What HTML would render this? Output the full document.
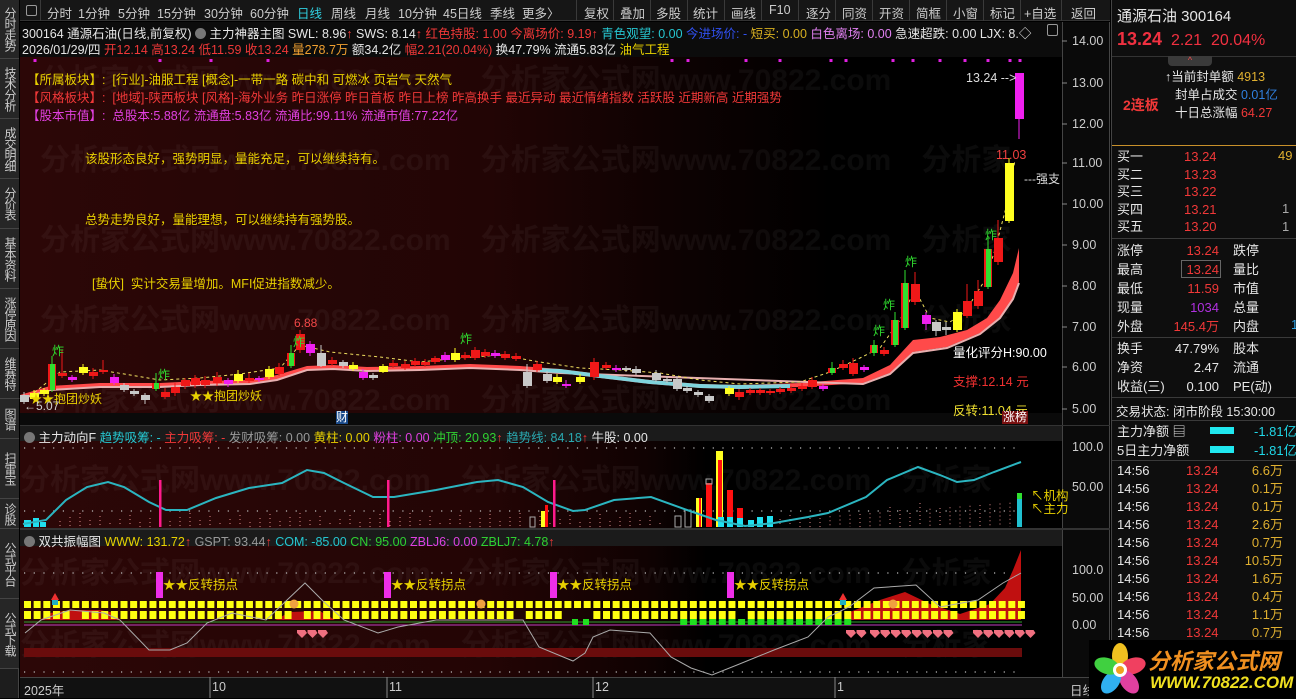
<!DOCTYPE html>
<html><head><meta charset="utf-8">
<style>
*{margin:0;padding:0;box-sizing:border-box}
body{width:1296px;height:698px;background:#000;overflow:hidden;position:relative;font-family:"Liberation Sans","Noto Sans CJK SC",sans-serif;font-size:12px;color:#ddd}
.a{position:absolute;white-space:nowrap}
#side{position:absolute;left:0;top:0;width:19px;height:698px;background:#1d1d1d;border-right:1px solid #444}
.tab{position:absolute;left:0;width:19px;border-bottom:1px solid #444;color:#ccc;font-size:12px;line-height:13px;text-align:center;writing-mode:vertical-rl;letter-spacing:-1px;display:flex;align-items:center;justify-content:center;background:#262626}
#tb{position:absolute;left:20px;top:0;width:1090px;height:21px;background:#161616;border-bottom:1px solid #333}
.tbi{position:absolute;top:3px;font-size:12.5px;color:#ccc}
.tbd{position:absolute;top:0;width:1px;height:21px;background:#3a3a3a}
.r{color:#f03838}.y{color:#e8d000}.c{color:#26c6d0}.m{color:#e040e0}.w{color:#e6e6e6}.g{color:#999}.gr{color:#30d030}.o{color:#f0a030}
.ax{position:absolute;left:1072px;font-size:12.5px;color:#ccc}
.rp{position:absolute;font-size:13px;white-space:nowrap}
.sep{position:absolute;left:1112px;width:184px;height:1px;background:#3a3a3a}
.wm{position:absolute;font-size:30px;font-weight:bold;color:rgba(255,255,255,0.045);white-space:nowrap}
#rpan{position:absolute;left:1111px;top:0;width:185px;height:698px;background:#0e0e0e;overflow:hidden}
</style></head><body>

<div class="a" style="left:20px;top:22px;width:1042px;height:35px;background:#0c0c0c"></div>
<div class="a" style="left:20px;top:57px;width:1042px;height:356px;background:linear-gradient(to right,#2c0707 0%,#220505 45%,#0e0202 62%,#000 78%)"></div>
<div class="a" style="left:20px;top:413px;width:1042px;height:13px;background:#0a0a0a"></div>
<div class="a" style="left:20px;top:426px;width:1042px;height:15px;background:#1b1b1b"></div>
<div class="a" style="left:20px;top:441px;width:1042px;height:88px;background:linear-gradient(to right,#2c0707 0%,#230505 45%,#100202 60%,#000 66%)"></div>
<div class="a" style="left:20px;top:530px;width:1042px;height:16px;background:#1b1b1b"></div>
<div class="a" style="left:20px;top:546px;width:1042px;height:131px;background:linear-gradient(to right,#2c0707 0%,#230505 45%,#100202 60%,#000 66%)"></div>
<div class="a" style="left:20px;top:677px;width:1090px;height:21px;background:#111;border-top:1px solid #444"></div>
<div class="a" style="left:1062px;top:22px;width:48px;height:655px;background:#0a0a0a;border-left:1px solid #444;border-right:1px solid #444"></div>
<div class="a" style="left:20px;top:528px;width:1090px;height:2px;background:#333"></div>
<div class="a" style="left:20px;top:425px;width:1090px;height:1px;background:#333"></div>

<div class="wm" style="left:40px;top:55px">分析家公式网www.70822.com　分析家公式网www.70822.com</div>
<div class="wm" style="left:40px;top:135px">分析家公式网www.70822.com　分析家公式网www.70822.com　分析家</div>
<div class="wm" style="left:40px;top:215px">分析家公式网www.70822.com　分析家公式网www.70822.com　分析家</div>
<div class="wm" style="left:40px;top:295px">分析家公式网www.70822.com　分析家公式网www.70822.com　分析家</div>
<div class="wm" style="left:40px;top:375px">分析家公式网www.70822.com　分析家公式网www.70822.com</div>
<div class="wm" style="left:20px;top:455px">分析家公式网www.70822.com　分析家公式网www.70822.com　分析家</div>
<div class="wm" style="left:20px;top:548px">分析家公式网www.70822.com　分析家公式网www.70822.com　分析家</div>
<div class="wm" style="left:20px;top:620px">分析家公式网www.70822.com　分析家公式网www.70822.com　分析家</div>

<svg id="cv" class="a" style="left:0;top:0" width="1296" height="698" xmlns="http://www.w3.org/2000/svg">
<g id="grid" stroke="#bbb" stroke-width="1.2" stroke-dasharray="1.2 8.5" fill="none">
<line x1="24" y1="448" x2="1020" y2="448"/>
<line x1="24" y1="511" x2="1020" y2="511"/>
<line x1="24" y1="573" x2="1020" y2="573"/>
<line x1="24" y1="672" x2="1020" y2="672"/>
</g>
<g id="vd" stroke="#d88" stroke-width="1" stroke-dasharray="1 3"></g>
<polygon fill="#ff4a4a" points="20,395 50,386 100,383 160,383 200,381 250,380 277,375 307,366 333,365 367,367 420,366 470,364 520,366 560,369 600,374 650,380 700,384 740,385 800,383 863,378 890,365 913,340 940,337 967,330 987,318 1000,300 1013,273 1019,248 1019,282 1013,298 1000,317 980,333 947,347 913,352 890,373 863,383 800,387 740,389 700,388 650,384 600,378 560,373 520,370 470,368 420,370 367,371 333,369 307,370 277,380 250,384 200,385 160,387 100,387 50,390 20,399"/>
<polyline fill="none" stroke="#e8b0b0" stroke-width="2" points="20,399 50,390 100,387 160,387 200,385 250,384 277,380 307,370 333,369 367,371 420,370 470,368 520,370 560,373 863,384 890,374 913,353 947,348 980,334 1000,318 1013,299 1019,283"/>
<polygon fill="#7fd3dc" points="540,368 560,369 600,374 650,380 700,384 740,385 790,384 790,388 740,389 700,388 650,384 600,378 560,373 540,372"/>
<polyline id="dash" fill="none" stroke="#f0e060" stroke-width="1" stroke-dasharray="3 3" points="25,400 60,372 100,370 160,380 200,378 240,374 280,368 300,345 330,352 380,357 420,362 460,358 500,355 540,362 580,368 620,370 660,373 700,380 740,384 800,382 830,372 860,358 880,348 900,320 915,290 930,318 950,322 965,312 985,280 995,250 1008,200 1015,160"/>
<g id="candles"></g>
<g id="ind1"></g>
<polyline fill="none" stroke="#2bb5c0" stroke-width="2" points="23,524 46,520 66,500 87,487 108,482 124,487 149,502 166,510 187,510 216,498 249,488 282,483 307,470 324,473 344,483 373,497 394,497 436,490 477,482 498,480 523,487 548,502 573,511 585,510 614,500 651,497 687,510 716,520 745,526 774,523 808,517 828,513 866,497 887,480 918,467 940,475 957,482 974,480 994,472 1021,462"/>
<g fill="#ff1a8c"><rect x="159" y="480" width="2.5" height="47"/><rect x="387" y="480" width="2.5" height="47"/><rect x="553" y="480" width="2.5" height="47"/></g>
<polygon fill="#c01010" points="40,620 50,613 70,610 100,610 115,613 120,620"/>
<polygon fill="#c01010" points="275,620 290,612 320,611 335,620"/>
<polygon fill="#c01010" points="845,620 850,612 880,600 905,592 930,604 960,614 990,604 1005,588 1013,570 1021,550 1021,620"/>
<rect x="24" y="648" width="998" height="9" fill="#6a0c0c"/>
<line x1="24" y1="622" x2="1022" y2="622" stroke="#30a030" stroke-width="1"/>
<line x1="24" y1="625" x2="1022" y2="625" stroke="#c040c0" stroke-width="1"/>
<g id="sq"></g>
<polyline fill="none" stroke="#aaa" stroke-width="1" points="25,633 41,620 70,610 104,613 120,620 149,650 170,650 187,643 207,623 232,613 266,620 305,583 324,602 344,620 378,633 398,627 436,620 469,620 523,620 539,647 573,661 585,653 593,637 610,630 650,633 671,657 691,668 712,675 737,665 774,650 808,637 828,617 849,607 874,588 916,585 940,607 978,600 1003,583 1021,573"/>
<g fill="#ee2ee8"><rect x="156" y="572" width="7" height="26"/><rect x="384" y="572" width="7" height="26"/><rect x="550" y="572" width="7" height="26"/><rect x="727" y="572" width="7" height="26"/></g>
<g id="hearts" fill="#f07080"></g>
<g stroke="#888"><line x1="1062" y1="41" x2="1067" y2="41"/><line x1="1062" y1="83" x2="1067" y2="83"/><line x1="1062" y1="124" x2="1067" y2="124"/><line x1="1062" y1="163" x2="1067" y2="163"/><line x1="1062" y1="204" x2="1067" y2="204"/><line x1="1062" y1="245" x2="1067" y2="245"/><line x1="1062" y1="286" x2="1067" y2="286"/><line x1="1062" y1="327" x2="1067" y2="327"/><line x1="1062" y1="367" x2="1067" y2="367"/><line x1="1062" y1="409" x2="1067" y2="409"/>
<line x1="210" y1="677" x2="210" y2="698"/><line x1="387" y1="677" x2="387" y2="698"/><line x1="593" y1="677" x2="593" y2="698"/><line x1="835" y1="677" x2="835" y2="698"/></g>
<g fill="#e020e0" id="mdots"></g>
</svg>

<div id="side">
<div class="tab" style="top:0;height:59px">分时走势</div>
<div class="tab" style="top:59px;height:60px">技术分析</div>
<div class="tab" style="top:119px;height:60px">成交明细</div>
<div class="tab" style="top:179px;height:50px">分价表</div>
<div class="tab" style="top:229px;height:60px">基本资料</div>
<div class="tab" style="top:289px;height:60px">涨停原因</div>
<div class="tab" style="top:349px;height:50px">维赛特</div>
<div class="tab" style="top:399px;height:40px">图谱</div>
<div class="tab" style="top:439px;height:60px">扫雷宝</div>
<div class="tab" style="top:499px;height:30px">诊股</div>
<div class="tab" style="top:529px;height:70px">公式平台</div>
<div class="tab" style="top:599px;height:70px">公式下载</div>
</div>

<div id="tb">
<div class="a" style="left:6px;top:5px;width:11px;height:11px;border:1px solid #999;border-radius:2px"></div>
<div class="tbd" style="left:20px"></div>
<span class="tbi" style="left:27px">分时</span><span class="tbi" style="left:58px">1分钟</span><span class="tbi" style="left:98px">5分钟</span><span class="tbi" style="left:137px">15分钟</span><span class="tbi" style="left:184px">30分钟</span><span class="tbi" style="left:230px">60分钟</span><span class="tbi" style="left:277px;color:#30d0e0">日线</span><span class="tbi" style="left:311px">周线</span><span class="tbi" style="left:345px">月线</span><span class="tbi" style="left:378px">10分钟</span><span class="tbi" style="left:423px">45日线</span><span class="tbi" style="left:470px">季线</span><span class="tbi" style="left:502px">更多〉</span>
<div class="tbd" style="left:556px"></div><span class="tbi" style="left:564px">复权</span>
<div class="tbd" style="left:593px"></div><span class="tbi" style="left:600px">叠加</span>
<div class="tbd" style="left:630px"></div><span class="tbi" style="left:636px">多股</span>
<div class="tbd" style="left:667px"></div><span class="tbi" style="left:673px">统计</span>
<div class="tbd" style="left:704px"></div><span class="tbi" style="left:711px">画线</span>
<div class="tbd" style="left:741px"></div><span class="tbi" style="left:749px">F10</span>
<div class="tbd" style="left:778px"></div><span class="tbi" style="left:786px">逐分</span>
<div class="tbd" style="left:815px"></div><span class="tbi" style="left:822px">同资</span>
<div class="tbd" style="left:852px"></div><span class="tbi" style="left:859px">开资</span>
<div class="tbd" style="left:889px"></div><span class="tbi" style="left:896px">简框</span>
<div class="tbd" style="left:926px"></div><span class="tbi" style="left:933px">小窗</span>
<div class="tbd" style="left:963px"></div><span class="tbi" style="left:970px">标记</span>
<div class="tbd" style="left:1000px"></div><span class="tbi" style="left:1004px">+自选</span>
<div class="tbd" style="left:1041px"></div><span class="tbi" style="left:1051px">返回</span>
</div>

<div class="a" style="left:22px;top:23px;font-size:12.5px"><span class="w">300164 通源石油(日线,前复权)</span> <span style="display:inline-block;width:11px;height:11px;border-radius:50%;background:#777;vertical-align:-1px"></span> <span class="w">主力神器主图 SWL: 8.96</span><span class="r">↑</span> <span class="w">SWS: 8.14</span><span class="r">↑</span> <span class="r">红色持股: 1.00 今离场价: 9.19↑</span> <span class="c">青色观望: 0.00</span> <span style="color:#3050f0">今进场价: -</span> <span style="color:#d8b020">短买: 0.00</span> <span style="color:#e080f0">白色离场: 0.00</span> <span class="w">急速超跌: 0.00 LJX: 8.◇</span></div>
<div class="a" style="left:1047px;top:24px;width:11px;height:12px;border:1px solid #999;border-radius:2px"></div>
<div class="a" style="left:22px;top:39px;font-size:12.5px"><span class="w">2026/01/29/四</span> <span class="r">开12.14 高13.24 低11.59 收13.24</span> <span class="o">量278.7万</span> <span class="w">额34.2亿</span> <span class="r">幅2.21(20.04%)</span> <span class="w">换47.79% 流通5.83亿</span> <span class="y">油气工程</span></div>

<div class="a y" style="left:27px;top:69px;font-size:12.5px">【所属板块】:&nbsp; [行业]-油服工程 [概念]-一带一路 碳中和 可燃冰 页岩气 天然气</div>
<div class="a r" style="left:27px;top:87px;font-size:12.5px">【风格板块】:&nbsp; [地域]-陕西板块 [风格]-海外业务 昨日涨停 昨日首板 昨日上榜 昨高换手 最近异动 最近情绪指数 活跃股 近期新高 近期强势</div>
<div class="a m" style="left:27px;top:105px;font-size:12.5px">【股本市值】:&nbsp; 总股本:5.88亿 流通盘:5.83亿 流通比:99.11% 流通市值:77.22亿</div>
<div class="a y" style="left:85px;top:148px;font-size:12.5px">该股形态良好，强势明显，量能充足，可以继续持有。</div>
<div class="a y" style="left:85px;top:209px;font-size:12.5px">总势走势良好，量能理想，可以继续持有强势股。</div>
<div class="a y" style="left:92px;top:273px;font-size:12.5px">[蛰伏]&nbsp; 实计交易量增加。MFI促进指数减少。</div>

<div class="a" style="left:52px;top:342px;color:#30e030;font-size:12px">炸</div>
<div class="a" style="left:158px;top:366px;color:#30e030;font-size:12px">炸</div>
<div class="a" style="left:293px;top:333px;color:#30e030;font-size:12px">炸</div>
<div class="a" style="left:460px;top:330px;color:#30e030;font-size:12px">炸</div>
<div class="a" style="left:873px;top:322px;color:#30e030;font-size:12px">炸</div>
<div class="a" style="left:883px;top:296px;color:#30e030;font-size:12px">炸</div>
<div class="a" style="left:905px;top:253px;color:#30e030;font-size:12px">炸</div>
<div class="a" style="left:985px;top:226px;color:#30e030;font-size:12px">炸</div>
<div class="a" style="left:294px;top:316px;color:#f04848;font-size:12px">6.88</div>
<div class="a y" style="left:30px;top:390px;font-size:12px">★★抱团炒妖</div>
<div class="a y" style="left:190px;top:387px;font-size:12px">★★抱团炒妖</div>
<div class="a" style="left:24px;top:399px;color:#ccc;font-size:12px">←5.07</div>
<div class="a" style="left:336px;top:411px;color:#fff;background:#1a4a8a;font-size:12px;line-height:13px">财</div>
<div class="a" style="left:966px;top:71px;color:#ddd;font-size:12.5px">13.24 --&gt;</div>
<div class="a" style="left:996px;top:148px;color:#f04040;font-size:12.5px">11.03</div>
<div class="a" style="left:1024px;top:170px;color:#ddd;font-size:12px">---强支</div>
<div class="a" style="left:953px;top:342px;color:#fff;font-size:12.5px">量化评分H:90.00</div>
<div class="a" style="left:953px;top:371px;color:#f03030;font-size:12.5px">支撑:12.14 元</div>
<div class="a" style="left:953px;top:400px;color:#f0e030;font-size:12.5px">反转:11.04 元</div>
<div class="a" style="left:1002px;top:411px;color:#fff;background:#7a1010;font-size:12px;line-height:13px;padding:0 1px">涨榜</div>

<div class="a" style="left:24px;top:427px;font-size:12.5px"><span style="display:inline-block;width:11px;height:11px;border-radius:50%;background:#777;vertical-align:-1px"></span> <span class="w">主力动向F</span> <span class="c">趋势吸筹: -</span> <span class="r">主力吸筹: -</span> <span class="g">发财吸筹: 0.00</span> <span class="y">黄柱: 0.00</span> <span class="m">粉柱: 0.00</span> <span class="gr">冲顶: 20.93</span><span class="r">↑</span> <span style="color:#2aa8b0">趋势线: 84.18</span><span class="r">↑</span> <span class="w">牛股: 0.00</span></div>
<div class="a" style="left:24px;top:531px;font-size:12.5px"><span style="display:inline-block;width:11px;height:11px;border-radius:50%;background:#777;vertical-align:-1px"></span> <span class="w">双共振幅图</span> <span class="y">WWW: 131.72</span><span class="r">↑</span> <span class="g">GSPT: 93.44</span><span class="r">↑</span> <span class="c">COM: -85.00</span> <span class="gr">CN: 95.00</span> <span class="m">ZBLJ6: 0.00</span> <span class="gr">ZBLJ7: 4.78</span><span class="r">↑</span></div>
<div class="a y" style="left:163px;top:574px;font-size:12.5px">★★反转拐点</div>
<div class="a y" style="left:391px;top:574px;font-size:12.5px">★★反转拐点</div>
<div class="a y" style="left:557px;top:574px;font-size:12.5px">★★反转拐点</div>
<div class="a y" style="left:734px;top:574px;font-size:12.5px">★★反转拐点</div>
<div class="a y" style="left:1031px;top:490px;font-size:12.5px;line-height:13px">↖机构<br>↖主力</div>

<div class="ax" style="top:34px">14.00</div><div class="ax" style="top:76px">13.00</div><div class="ax" style="top:117px">12.00</div><div class="ax" style="top:156px">11.00</div><div class="ax" style="top:197px">10.00</div><div class="ax" style="top:238px">9.00</div><div class="ax" style="top:279px">8.00</div><div class="ax" style="top:320px">7.00</div><div class="ax" style="top:360px">6.00</div><div class="ax" style="top:402px">5.00</div>
<div class="ax" style="top:440px">100.0</div><div class="ax" style="top:480px">50.00</div>
<div class="ax" style="top:563px">100.0</div><div class="ax" style="top:591px">50.00</div><div class="ax" style="top:618px">0.00</div>
<div class="a" style="left:24px;top:680px;color:#ccc;font-size:12.5px">2025年</div>
<div class="a" style="left:212px;top:680px;color:#ccc;font-size:12.5px">10</div>
<div class="a" style="left:389px;top:680px;color:#ccc;font-size:12.5px">11</div>
<div class="a" style="left:595px;top:680px;color:#ccc;font-size:12.5px">12</div>
<div class="a" style="left:837px;top:680px;color:#ccc;font-size:12.5px">1</div>
<div class="a" style="left:1070px;top:680px;color:#ccc;font-size:12.5px">日线</div>

<!-- right panel (coords relative to 1111) -->
<div id="rpan">
<div class="rp w" style="left:6px;top:5px;font-size:15px">通源石油 300164</div>
<div class="rp" style="left:6px;top:29px;color:#f03040;font-size:16px"><b style="font-size:18px">13.24</b>&nbsp; 2.21&nbsp; 20.04%</div>
<div class="a" style="left:1px;top:56px;width:184px;height:1px;background:#333"></div>
<div class="a" style="left:57px;top:56px;width:44px;height:10px;background:#3a3a3a;border-radius:0 0 4px 4px;color:#f05050;font-size:9px;text-align:center;line-height:9px">^</div>
<div class="rp w" style="left:54px;top:66px;font-size:12.5px">↑当前封单额 <span style="color:#e0b030">4913</span></div>
<div class="rp w" style="left:64px;top:84px;font-size:12.5px">封单占成交 <span style="color:#3080e0">0.01亿</span></div>
<div class="rp w" style="left:64px;top:102px;font-size:12.5px">十日总涨幅 <span class="r">64.27</span></div>
<div class="rp r" style="left:12px;top:95px;font-size:14px;font-weight:bold">2连板</div>
<div class="a" style="left:1px;top:145px;width:184px;height:1px;background:#c8902a"></div>
<div class="rp w" style="left:6px;top:148px;line-height:17.5px">买一<br>买二<br>买三<br>买四<br>买五</div>
<div class="rp r" style="left:73px;top:148px;line-height:17.5px">13.24<br>13.23<br>13.22<br>13.21<br>13.20</div>
<div class="rp" style="left:167px;top:148px;color:#e0b030">49</div>
<div class="rp" style="left:171px;top:200px;color:#aaa;line-height:17.5px">1<br>1</div>
<div class="a" style="left:1px;top:238px;width:184px;height:1px;background:#3a3a3a"></div>
<div class="rp w" style="left:6px;top:241px;line-height:19px">涨停<br>最高<br>最低<br>现量<br>外盘</div>
<div class="rp r" style="left:52px;top:241px;line-height:19px;text-align:right;width:56px">13.24<br>13.24<br>11.59<br><span style="color:#b030e0">1034</span><br>145.4万</div>
<div class="a" style="left:70px;top:260px;width:40px;height:18px;border:1px solid #666"></div>
<div class="rp w" style="left:122px;top:241px;line-height:19px">跌停<br>量比<br>市值<br>总量<br>内盘</div>
<div class="rp" style="left:180px;top:317px;color:#30a0e0">1</div>
<div class="a" style="left:1px;top:337px;width:184px;height:1px;background:#3a3a3a"></div>
<div class="rp w" style="left:6px;top:339px;line-height:19px">换手<br>净资<br>收益(三)</div>
<div class="rp w" style="left:40px;top:339px;line-height:19px;text-align:right;width:68px">47.79%<br>2.47<br>0.100</div>
<div class="rp w" style="left:122px;top:339px;line-height:19px">股本<br>流通<br>PE(动)</div>
<div class="a" style="left:1px;top:397px;width:184px;height:1px;background:#3a3a3a"></div>
<div class="rp w" style="left:5px;top:401px;font-size:12.5px">交易状态: 闭市阶段 15:30:00</div>
<div class="a" style="left:1px;top:420px;width:184px;height:1px;background:#3a3a3a"></div>
<div class="rp w" style="left:6px;top:422px;line-height:19px">主力净额 ▤<br>5日主力净额</div>
<div class="a" style="left:99px;top:427px;width:24px;height:7px;background:#20e8f0"></div>
<div class="a" style="left:99px;top:446px;width:24px;height:7px;background:#20e8f0"></div>
<div class="rp" style="left:143px;top:422px;line-height:19px;color:#20d8e8">-1.81亿<br>-1.81亿</div>
<div class="a" style="left:1px;top:460px;width:184px;height:1px;background:#3a3a3a"></div>
<div class="rp w" style="left:6px;top:462px;line-height:18px">14:56<br>14:56<br>14:56<br>14:56<br>14:56<br>14:56<br>14:56<br>14:56<br>14:56<br>14:56</div>
<div class="rp r" style="left:75px;top:462px;line-height:18px">13.24<br>13.24<br>13.24<br>13.24<br>13.24<br>13.24<br>13.24<br>13.24<br>13.24<br>13.24</div>
<div class="rp" style="left:126px;top:462px;line-height:18px;color:#e0b030;text-align:right;width:46px">6.6万<br>0.1万<br>0.1万<br>2.6万<br>0.7万<br>10.5万<br>1.6万<br>0.4万<br>1.1万<br>0.7万</div>
</div>
<div class="a" style="left:1111px;top:0;width:1px;height:698px;background:#444"></div>

<div class="a" style="left:1089px;top:640px;width:207px;height:58px;background:#000"></div>
<svg class="a" style="left:1090px;top:640px" width="60" height="58">
<g transform="translate(30,30)">
<ellipse cx="0" cy="-14" rx="8" ry="13" fill="#f0c020"/>
<ellipse cx="13" cy="-4" rx="8" ry="13" fill="#f04060" transform="rotate(72 13 -4)"/>
<ellipse cx="9" cy="12" rx="8" ry="13" fill="#e040a0" transform="rotate(144 9 12)"/>
<ellipse cx="-9" cy="12" rx="8" ry="13" fill="#30b0f0" transform="rotate(216 -9 12)"/>
<ellipse cx="-13" cy="-4" rx="8" ry="13" fill="#40d040" transform="rotate(288 -13 -4)"/>
<circle r="7" fill="#fff"/><circle r="4" fill="#f0a020"/>
</g></svg>
<div class="a" style="left:1148px;top:644px;font-size:22px;font-weight:bold;font-style:italic;color:#f09020">分析家公式网</div>
<div class="a" style="left:1150px;top:673px;font-size:17px;font-weight:bold;font-style:italic;color:#f0e020">WWW.70822.COM</div>

<script>
var NS="http://www.w3.org/2000/svg";
function el(p,t,a){var e=document.createElementNS(NS,t);for(var k in a)e.setAttribute(k,a[k]);p.appendChild(e);return e;}
var C={r:"#f01818",y:"#ffff20",m:"#f020f0",g:"#c8c8c8",G:"#30e030",c:"#40c0d0"};
var cs=[[24,395,402,"g",392,404],[34,393,399,"y",390,400],[44,390,394,"y",388,396],[52,364,390,"G",356,392],[62,373,376,"r",350,378],[72,377,380,"m",375,382],[83,367,373,"y",364,375],[93,372,376,"r",368,379],[103,370,372,"r",360,374],[114,377,383,"m",374,385],[124,385,390,"g",383,392],[134,391,394,"g",389,396],[145,395,400,"g",393,404],[156,383,389,"G",373,391],[165,392,397,"r",388,399],[175,387,393,"r",383,396],[185,380,386,"r",378,389],[195,378,385,"r",375,388],[205,380,385,"r",376,388],[217,377,383,"r",372,386],[228,380,384,"m",378,387],[238,374,381,"y",370,383],[249,378,381,"r",373,383],[259,378,380,"m",376,382],[269,369,377,"y",366,379],[279,367,374,"r",363,376],[291,353,366,"G",345,368],[300,334,350,"r",330,353],[310,344,353,"m",341,356],[321,353,366,"g",345,367],[332,360,364,"r",357,366],[343,362,366,"g",360,368],[353,365,369,"y",362,371],[363,372,378,"m",369,380],[373,375,378,"g",373,380],[383,366,372,"y",364,373],[393,363,366,"r",360,368],[405,364,368,"r",361,370],[415,361,365,"r",358,367],[425,362,365,"r",359,367],[435,358,362,"r",356,364],[445,355,360,"m",352,362],[455,353,360,"y",348,362],[465,355,358,"r",352,360],[475,350,358,"r",347,360],[485,352,356,"r",349,358],[495,353,356,"m",350,358],[505,354,358,"r",351,360],[516,356,359,"r",353,361],[527,372,386,"g",364,388],[537,364,370,"r",361,372],[547,374,381,"g",371,383],[557,377,382,"y",374,384],[566,384,386,"m",380,388],[580,377,382,"y",374,384],[594,362,377,"r",358,380],[606,365,368,"r",362,370],[616,368,370,"m",365,372],[626,368,370,"g",366,372],[636,369,373,"g",366,375],[656,373,380,"g",370,382],[667,379,381,"g",376,383],[677,379,389,"g",376,391],[687,388,391,"g",386,393],[698,392,395,"g",390,397],[709,396,401,"g",394,403],[729,388,394,"y",386,396],[739,392,397,"r",389,400],[750,390,393,"r",388,395],[760,390,393,"r",388,395],[770,391,393,"r",389,395],[780,389,392,"r",387,394],[791,388,391,"r",386,393],[802,386,389,"r",383,391],[812,380,387,"r",377,389],[823,386,389,"m",384,391],[832,368,373,"G",362,375],[843,364,368,"r",360,370],[853,363,374,"r",358,376],[864,367,370,"m",365,372],[874,345,353,"G",340,356],[884,350,354,"r",347,356],[895,320,345,"G",312,347],[905,283,328,"G",270,330],[915,284,302,"r",272,305],[926,315,324,"m",312,330],[936,322,331,"g",320,336],[946,327,330,"g",322,335],[957,312,330,"y",309,332],[967,301,316,"r",284,318],[978,291,306,"r",280,309],[988,249,287,"G",238,289],[998,238,262,"r",220,265],[1009,163,221,"y",158,223],[1019,73,119,"m",73,139]];
var g=document.getElementById("candles");
cs.forEach(function(c){var col=C[c[3]];var x=c[0];
el(g,"line",{x1:x,x2:x,y1:c[4],y2:c[5],stroke:col,"stroke-width":1});
var h=Math.max(2,c[2]-c[1]);
if(c[3]=="G"){el(g,"rect",{x:x-4,y:c[1],width:8,height:h,fill:"#f01818"});el(g,"rect",{x:x-2,y:c[1],width:5,height:h,fill:col});}
else el(g,"rect",{x:x-4,y:c[1],width:9,height:h,fill:col});});
var md=document.getElementById("mdots");[35,160,211,268,672,688,746,780,831,846,893,913,940,965,988,1010,1020].forEach(function(x){el(md,"rect",{x:x-1.5,y:59,width:3,height:3});});
var i1=document.getElementById("ind1");
function bar(x,t,b,col,w){el(i1,"rect",{x:x,y:t,width:w||6,height:b-t,fill:col});}
bar(24,520,527,"#20e0f0",7);bar(33,518,527,"#20e0f0",6);bar(40,522,527,"#20e0f0",6);
el(i1,"rect",{x:530,y:517,width:5,height:10,fill:"none",stroke:"#aaa"});
bar(541,511,527,"#ffff20",4);bar(545,505,527,"#ff1010",3);
el(i1,"rect",{x:675,y:516,width:6,height:11,fill:"none",stroke:"#aaa"});
el(i1,"rect",{x:685,y:510,width:6,height:17,fill:"none",stroke:"#aaa"});
bar(696,498,527,"#ffff20",6);bar(699,498,527,"#ff1010",2);
bar(706,483,527,"#ff1010",6);el(i1,"rect",{x:706,y:479,width:6,height:5,fill:"none",stroke:"#aaa"});
bar(716,451,527,"#ffff20",7);bar(718,460,527,"#ff1010",4);
bar(727,490,527,"#ff1010",6);bar(737,508,527,"#ff1010",6);
bar(718,517,527,"#20e0f0",6);bar(727,517,527,"#20e0f0",6);bar(737,518,527,"#20e0f0",6);bar(748,520,527,"#20e0f0",6);bar(757,517,527,"#20e0f0",6);bar(767,516,527,"#20e0f0",6);
bar(1017,497,527,"#20c0d0",5);bar(1017,493,499,"#30e030",5);
var vd=document.getElementById("vd");
for(var x=60;x<1015;x+=10){if(x>660&&x<780)continue;var h=4+((x*7)%11);if(x>820)h=10+((x-820)/20)*1.5;if(x>880&&x<930)h=14+(x%13);el(vd,"line",{x1:x,x2:x,y1:527-h,y2:527});}
var sq=document.getElementById("sq");
for(var x=24,i=0;x<1020;x+=9.65,i++){
el(sq,"rect",{x:x,y:601,width:7,height:7,fill:"#ffff10"});
if(!(x>560&&x<590)&&!(i%23==5))el(sq,"rect",{x:x,y:611,width:7,height:8,fill:"#ffff10"});
if(x>672&&x<850)el(sq,"rect",{x:x,y:619,width:7,height:6,fill:"#20e020"});}
el(sq,"rect",{x:572,y:619,width:6,height:6,fill:"#20e020"});el(sq,"rect",{x:583,y:619,width:6,height:6,fill:"#20e020"});
el(sq,"rect",{x:52,y:599,width:6,height:6,fill:"#20b0c0"});el(sq,"polygon",{points:"51,600 55,593 59,600",fill:"#f03030"});
el(sq,"rect",{x:840,y:599,width:6,height:6,fill:"#20b0c0"});el(sq,"polygon",{points:"839,600 843,593 847,600",fill:"#f03030"});
[294,481,893].forEach(function(x){el(sq,"circle",{cx:x,cy:604,r:4.5,fill:"#f0a040"});});
var hs=document.getElementById("hearts");
[[297,322],[846,860],[870,945],[973,1026]].forEach(function(s){for(var x=s[0];x<=s[1];x+=10.5){el(hs,"polygon",{points:(x)+",630 "+(x+8)+",630 "+(x+10)+",633 "+(x+5)+",638 "+(x)+",633"});}});
</script>
</body></html>
